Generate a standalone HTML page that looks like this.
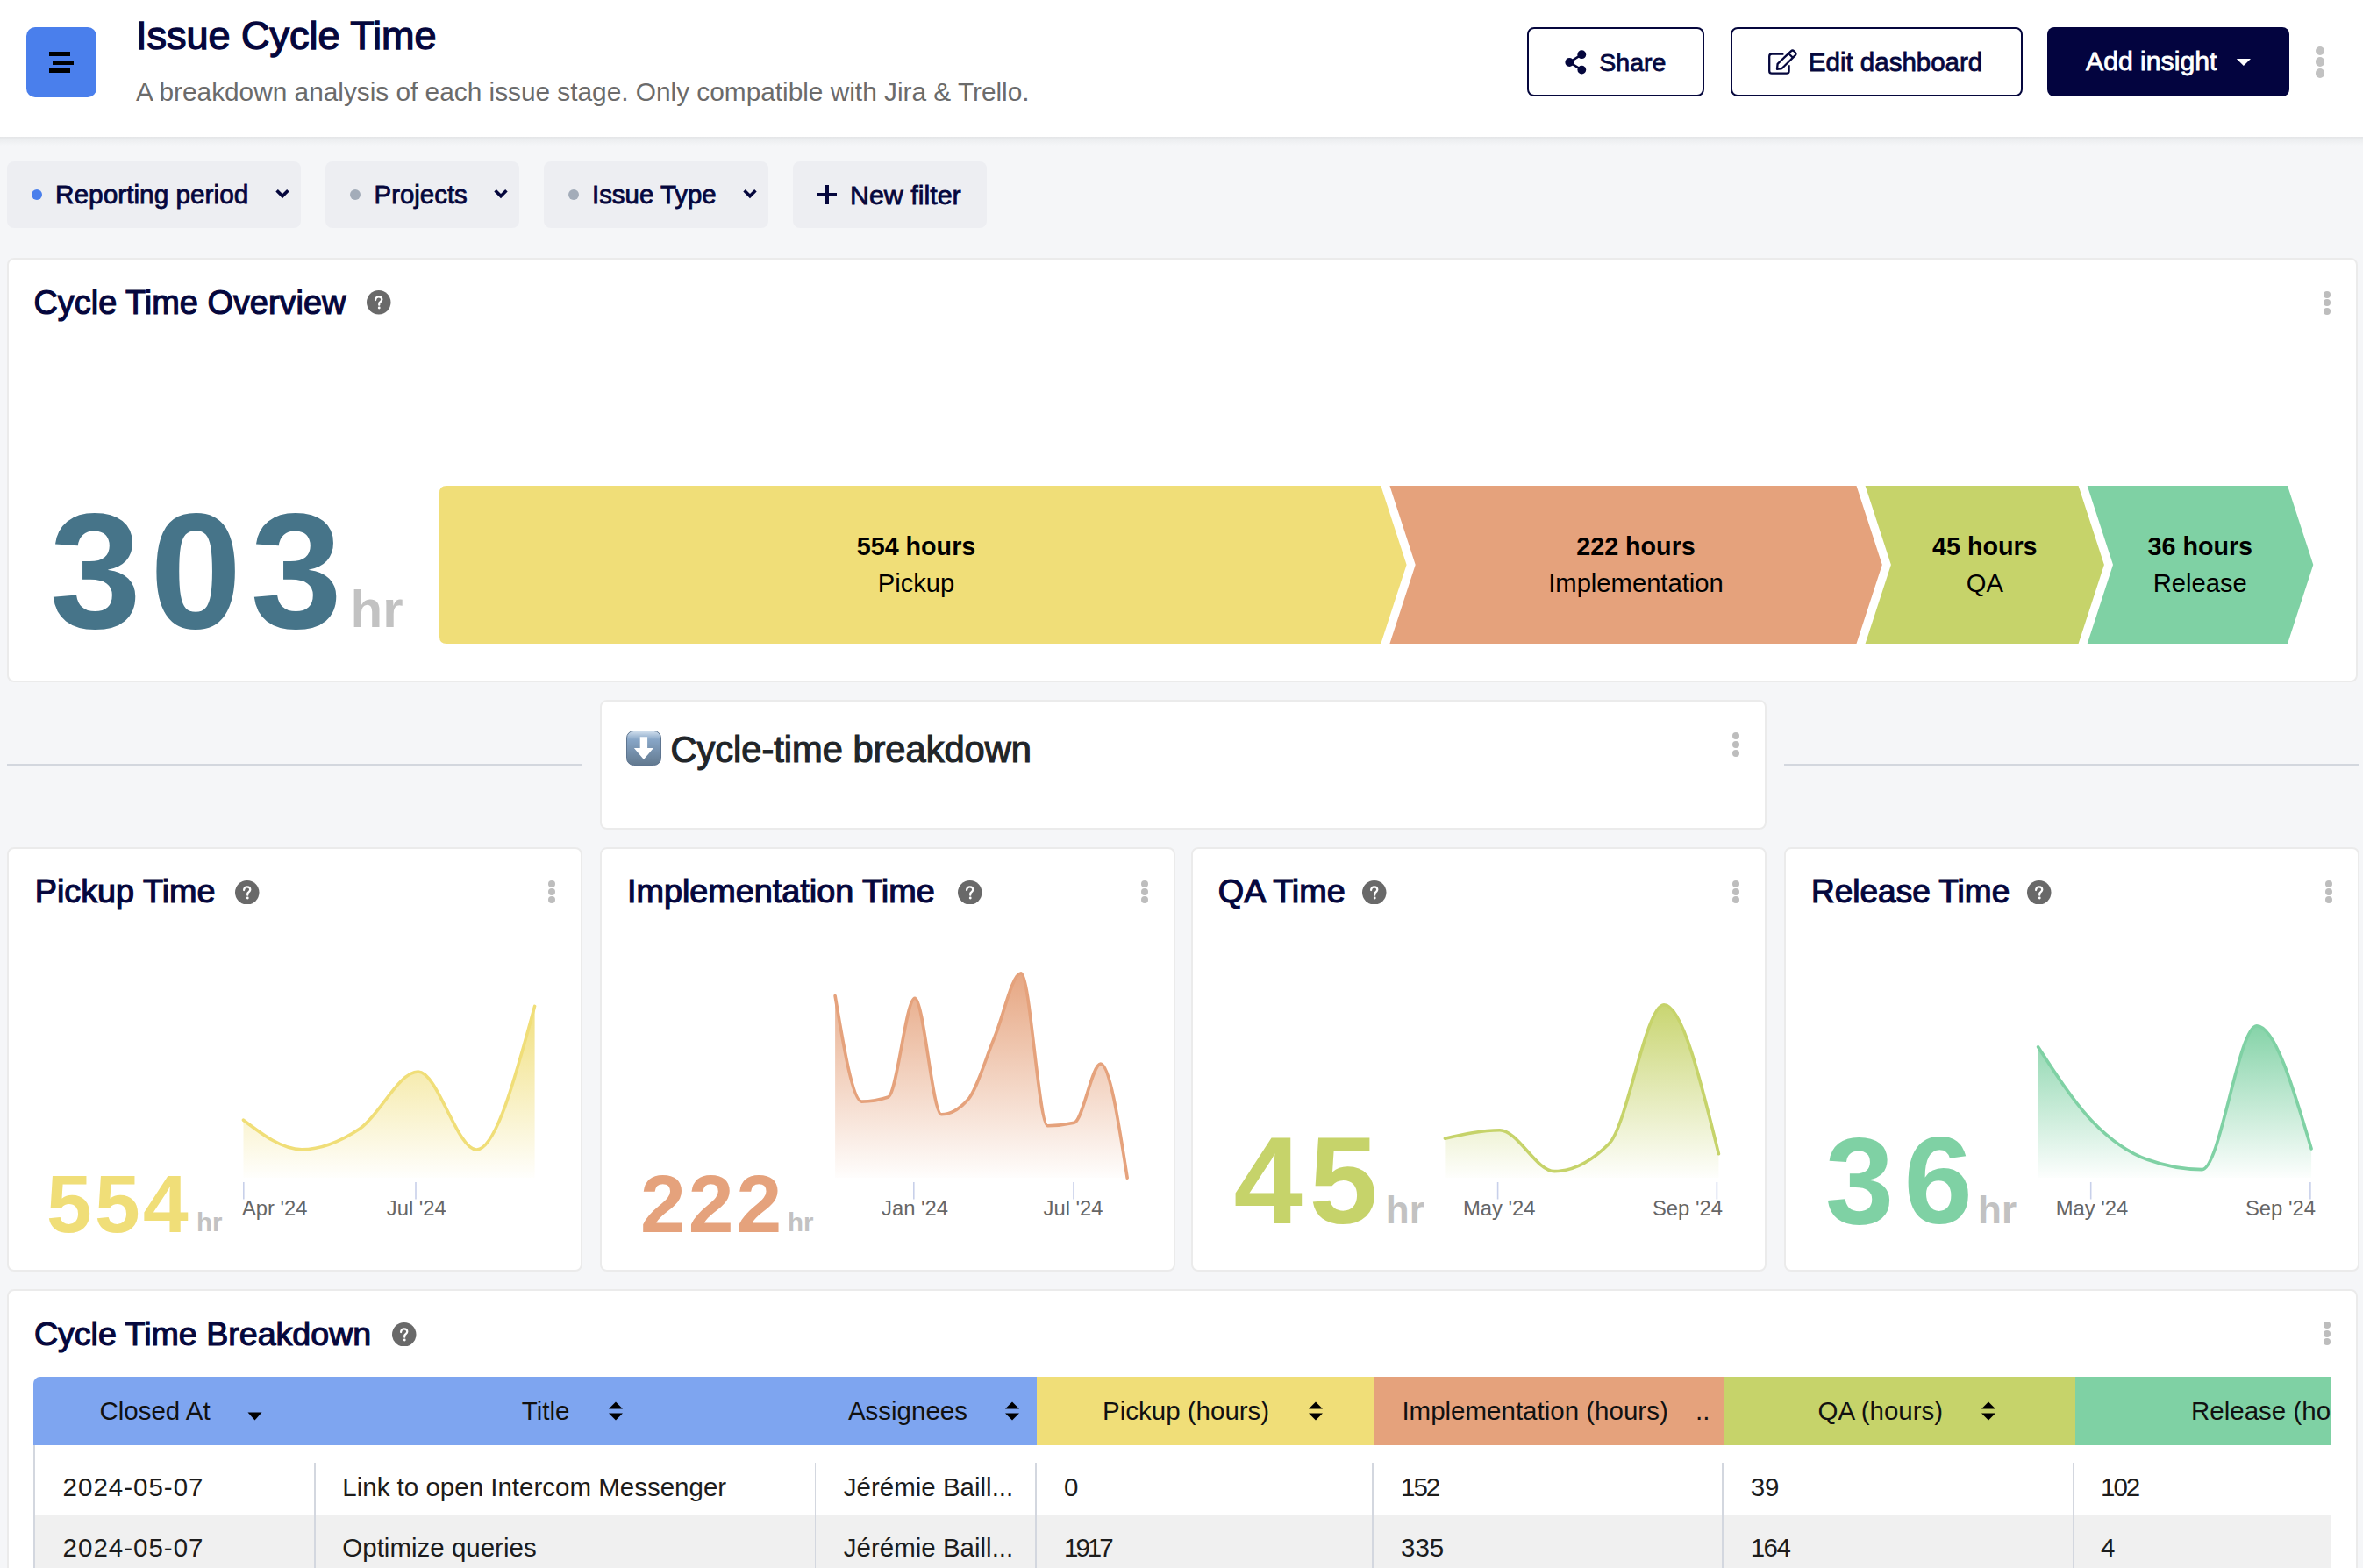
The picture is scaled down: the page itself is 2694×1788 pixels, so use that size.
<!DOCTYPE html>
<html><head><meta charset="utf-8">
<style>
html,body{margin:0;padding:0;}
body{width:2694px;height:1788px;overflow:hidden;position:relative;background:#f5f6f8;font-family:"Liberation Sans",sans-serif;}
.t{position:absolute;white-space:nowrap;line-height:1;}
.b{position:absolute;box-sizing:border-box;}
</style></head><body>
<div class="b" style="left:0px;top:0px;width:2694px;height:156px;background:#fff;"></div>
<div class="b" style="left:0px;top:156px;width:2694px;height:10px;background:linear-gradient(#e4e5e7,#eceef0 35%,#f5f6f8);"></div>
<div class="b" style="left:30px;top:31px;width:80px;height:80px;background:#4a7fec;border-radius:10px;"></div>
<div class="b" style="left:56px;top:59px;width:24px;height:5px;background:#000;"></div>
<div class="b" style="left:60px;top:68.5px;width:24px;height:5.0px;background:#000;"></div>
<div class="b" style="left:56px;top:78px;width:24px;height:5px;background:#000;"></div>
<div class="t" style="left:155.0px;top:17.9px;font-size:45px;font-weight:400;color:#05073d;-webkit-text-stroke:1.4px #05073d;">Issue Cycle Time</div>
<div class="t" style="left:155.0px;top:90.3px;font-size:29.8px;font-weight:400;color:#6b6b6b;">A breakdown analysis of each issue stage. Only compatible with Jira &amp; Trello.</div>
<div class="b" style="left:1741px;top:31px;width:202px;height:79px;border:2px solid #05073d;border-radius:8px;background:#fff;"></div>
<svg class="b" style="left:1780px;top:54px;width:30px;height:34px" viewBox="1780 54 30 34"><g fill="#05073d"><circle cx="1789.3" cy="71" r="4.9"/><circle cx="1803.3" cy="62.2" r="4.9"/><circle cx="1803.3" cy="79.6" r="4.9"/></g><path d="M1789.3 71 L1803.3 62.2 M1789.3 71 L1803.3 79.6" stroke="#05073d" stroke-width="2.6"/></svg>
<div class="t" style="left:1823.3px;top:56.9px;font-size:28.5px;font-weight:400;color:#05073d;-webkit-text-stroke:0.8px #05073d;">Share</div>
<div class="b" style="left:1973px;top:31px;width:333px;height:79px;border:2px solid #05073d;border-radius:8px;background:#fff;"></div>
<svg class="b" style="left:2010px;top:52px;width:44px;height:38px" viewBox="2010 52 44 38"><path d="M2033.4 61.5 L2020 61.5 Q2017.2 61.5 2017.2 64.3 L2017.2 80.9 Q2017.2 83.6 2020 83.6 L2036.8 83.6 Q2039.6 83.6 2039.6 80.9 L2039.6 74.3" fill="none" stroke="#05073d" stroke-width="2.3"/><path d="M2026.6 72.8 L2041.9 58.3 Q2043.6 56.7 2045.3 58.3 L2046.7 59.8 Q2048.2 61.5 2046.7 63.1 L2031.5 78 L2026 78.8 Z M2039.1 61 L2044 65.8" fill="none" stroke="#05073d" stroke-width="2.3" stroke-linejoin="round"/></svg>
<div class="t" style="left:2061.8px;top:56.0px;font-size:29.5px;font-weight:400;color:#05073d;-webkit-text-stroke:0.8px #05073d;">Edit dashboard</div>
<div class="b" style="left:2334px;top:31px;width:276px;height:79px;background:#03043f;border-radius:8px;"></div>
<div class="t" style="left:2378.0px;top:55.4px;font-size:30.2px;font-weight:400;color:#fff;-webkit-text-stroke:0.8px #fff;">Add insight</div>
<svg class="b" style="left:2549px;top:66px;width:18px;height:10px" viewBox="0 0 18 10"><path d="M0.8 0.9 L17 0.9 L8.9 9 Z" fill="#fff"/></svg>
<div class="b" style="left:2639.8px;top:52.6px;width:10.399999999999636px;height:10.299999999999997px;border-radius:50%;background:#c2c2c2;"></div>
<div class="b" style="left:2639.8px;top:65.4px;width:10.399999999999636px;height:10.399999999999991px;border-radius:50%;background:#c2c2c2;"></div>
<div class="b" style="left:2639.8px;top:78.2px;width:10.399999999999636px;height:10.399999999999991px;border-radius:50%;background:#c2c2c2;"></div>
<div class="b" style="left:8px;top:184px;width:335px;height:75.5px;background:#edeef2;border-radius:8px;"></div>
<div class="b" style="left:36px;top:215.7px;width:12px;height:12.0px;background:#4a7fec;border-radius:50%;"></div>
<div class="t" style="left:63.0px;top:206.8px;font-size:29.8px;font-weight:400;color:#05073d;-webkit-text-stroke:0.8px #05073d;">Reporting period</div>
<svg class="b" style="left:314px;top:215px;width:16px;height:12px" viewBox="0 0 16 12"><path d="M1.6 2.2 L8 8.6 L14.4 2.2" fill="none" stroke="#05073d" stroke-width="3.6"/></svg>
<div class="b" style="left:371px;top:184px;width:221px;height:75.5px;background:#edeef2;border-radius:8px;"></div>
<div class="b" style="left:398.5px;top:215.7px;width:12.0px;height:12.0px;background:#a3acb9;border-radius:50%;"></div>
<div class="t" style="left:426.6px;top:207.1px;font-size:29.4px;font-weight:400;color:#05073d;-webkit-text-stroke:0.8px #05073d;">Projects</div>
<svg class="b" style="left:563px;top:215px;width:16px;height:12px" viewBox="0 0 16 12"><path d="M1.6 2.2 L8 8.6 L14.4 2.2" fill="none" stroke="#05073d" stroke-width="3.6"/></svg>
<div class="b" style="left:620px;top:184px;width:256px;height:75.5px;background:#edeef2;border-radius:8px;"></div>
<div class="b" style="left:648px;top:215.7px;width:12px;height:12.0px;background:#a3acb9;border-radius:50%;"></div>
<div class="t" style="left:675.0px;top:207.1px;font-size:29.4px;font-weight:400;color:#05073d;-webkit-text-stroke:0.8px #05073d;">Issue Type</div>
<svg class="b" style="left:847.2px;top:215px;width:16px;height:12px" viewBox="0 0 16 12"><path d="M1.6 2.2 L8 8.6 L14.4 2.2" fill="none" stroke="#05073d" stroke-width="3.6"/></svg>
<div class="b" style="left:904px;top:184px;width:221px;height:75.5px;background:#edeef2;border-radius:8px;"></div>
<div class="b" style="left:932.2px;top:220.3px;width:21.59999999999991px;height:3.5999999999999943px;background:#05073d;"></div>
<div class="b" style="left:941.2px;top:211.4px;width:3.599999999999909px;height:21.400000000000006px;background:#05073d;"></div>
<div class="t" style="left:969.0px;top:206.7px;font-size:30.4px;font-weight:400;color:#05073d;-webkit-text-stroke:0.8px #05073d;">New filter</div>
<div class="b" style="left:8px;top:294px;width:2680px;height:484px;background:#fff;border:2px solid #ebebeb;border-radius:8px;"></div>
<div class="t" style="left:38.5px;top:327.3px;font-size:37.9px;font-weight:400;color:#05073d;-webkit-text-stroke:1.2px #05073d;">Cycle Time Overview</div>
<svg class="b" style="left:418.2px;top:331.2px;width:27.5px;height:27.5px" viewBox="0 0 28 28"><circle cx="14" cy="14" r="14" fill="#696969"/><path d="M10.3 11.2 C10.3 8.9 12 7.6 14 7.6 C16.1 7.6 17.6 8.9 17.6 10.8 C17.6 12.9 15.2 13.4 14.6 15 L14.5 17" fill="none" stroke="#fff" stroke-width="2.3" stroke-linecap="round"/><circle cx="14.5" cy="20.4" r="1.45" fill="#fff"/></svg>
<div class="b" style="left:2649.0px;top:331.5px;width:8.0px;height:8.0px;border-radius:50%;background:#bdbdbd;"></div>
<div class="b" style="left:2649.0px;top:341.2px;width:8.0px;height:8.0px;border-radius:50%;background:#bdbdbd;"></div>
<div class="b" style="left:2649.0px;top:350.9px;width:8.0px;height:8.0px;border-radius:50%;background:#bdbdbd;"></div>
<div class="t" style="left:56.4px;top:557.2px;font-size:188px;font-weight:700;color:#467489;letter-spacing:10px;">303</div>
<div class="t" style="left:399.5px;top:664.7px;font-size:60px;font-weight:700;color:#c2c2c2;">hr</div>
<svg class="b" style="left:0;top:0;width:2694px;height:1788px" viewBox="0 0 2694 1788"><path d="M509 554 L1574.3 554 L1603.6 644 L1574.3 734 L509 734 Q501 734 501 726 L501 562 Q501 554 509 554 Z" fill="#f0de78"/><path d="M1584.4 554 L2116.5 554 L2145.8 644 L2116.5 734 L1584.4 734 L1613.7 644 Z" fill="#e5a27c"/><path d="M2126.6 554 L2369.6 554 L2398.9 644 L2369.6 734 L2126.6 734 L2155.9 644 Z" fill="#c6d36a"/><path d="M2379.7 554 L2608 554 L2637.3 644 L2608 734 L2379.7 734 L2409 644 Z" fill="#7fd1a4"/></svg>
<div class="t" style="left:544.5px;width:1000px;text-align:center;top:609.1px;font-size:28.7px;font-weight:700;color:#000;">554 hours</div>
<div class="t" style="left:544.5px;width:1000px;text-align:center;top:651.1px;font-size:29.2px;font-weight:400;color:#000;">Pickup</div>
<div class="t" style="left:1365.0px;width:1000px;text-align:center;top:609.1px;font-size:28.7px;font-weight:700;color:#000;">222 hours</div>
<div class="t" style="left:1365.0px;width:1000px;text-align:center;top:651.1px;font-size:29.2px;font-weight:400;color:#000;">Implementation</div>
<div class="t" style="left:1762.8px;width:1000px;text-align:center;top:609.1px;font-size:28.7px;font-weight:700;color:#000;">45 hours</div>
<div class="t" style="left:1762.8px;width:1000px;text-align:center;top:651.1px;font-size:29.2px;font-weight:400;color:#000;">QA</div>
<div class="t" style="left:2008.3px;width:1000px;text-align:center;top:609.1px;font-size:28.7px;font-weight:700;color:#000;">36 hours</div>
<div class="t" style="left:2008.3px;width:1000px;text-align:center;top:651.1px;font-size:29.2px;font-weight:400;color:#000;">Release</div>
<div class="b" style="left:8px;top:871px;width:656px;height:2px;background:#d3d7de;"></div>
<div class="b" style="left:2034px;top:870.5px;width:656px;height:2.0px;background:#d3d7de;"></div>
<div class="b" style="left:684px;top:798px;width:1330px;height:148px;background:#fff;border:2px solid #ebebeb;border-radius:8px;"></div>
<svg class="b" style="left:714px;top:833px;width:40px;height:40px" viewBox="0 0 40 40"><defs><linearGradient id="emo" x1="0" y1="0" x2="0" y2="1"><stop offset="0" stop-color="#d2e0ee"/><stop offset="0.25" stop-color="#88a6c7"/><stop offset="1" stop-color="#62798f"/></linearGradient></defs><rect x="0.5" y="0.5" width="39" height="39" rx="8" fill="url(#emo)" stroke="#5e7590" stroke-width="1"/><path d="M15.7 7.3 L24.1 7.3 L24.1 20 L31 20 L19.9 33 L8.9 20 L15.7 20 Z" fill="#fff"/></svg>
<div class="t" style="left:764.4px;top:833.7px;font-size:41.6px;font-weight:400;color:#212529;-webkit-text-stroke:1.2px #212529;">Cycle-time breakdown</div>
<div class="b" style="left:1975.0px;top:835.1px;width:8.0px;height:8.0px;border-radius:50%;background:#bdbdbd;"></div>
<div class="b" style="left:1975.0px;top:844.8px;width:8.0px;height:8.0px;border-radius:50%;background:#bdbdbd;"></div>
<div class="b" style="left:1975.0px;top:854.5px;width:8.0px;height:8.0px;border-radius:50%;background:#bdbdbd;"></div>
<div class="b" style="left:8px;top:966px;width:656px;height:484px;background:#fff;border:2px solid #ebebeb;border-radius:8px;"></div>
<div class="t" style="left:39.7px;top:997.7px;font-size:37.8px;font-weight:400;color:#05073d;-webkit-text-stroke:1.2px #05073d;">Pickup Time</div>
<svg class="b" style="left:268.2px;top:1003.5px;width:27.5px;height:27.5px" viewBox="0 0 28 28"><circle cx="14" cy="14" r="14" fill="#696969"/><path d="M10.3 11.2 C10.3 8.9 12 7.6 14 7.6 C16.1 7.6 17.6 8.9 17.6 10.8 C17.6 12.9 15.2 13.4 14.6 15 L14.5 17" fill="none" stroke="#fff" stroke-width="2.3" stroke-linecap="round"/><circle cx="14.5" cy="20.4" r="1.45" fill="#fff"/></svg>
<div class="b" style="left:625.0px;top:1003.6px;width:8.0px;height:8.0px;border-radius:50%;background:#bdbdbd;"></div>
<div class="b" style="left:625.0px;top:1013.0px;width:8.0px;height:8.0px;border-radius:50%;background:#bdbdbd;"></div>
<div class="b" style="left:625.0px;top:1022.4px;width:8.0px;height:8.000000000000114px;border-radius:50%;background:#bdbdbd;"></div>
<div class="b" style="left:684px;top:966px;width:656px;height:484px;background:#fff;border:2px solid #ebebeb;border-radius:8px;"></div>
<div class="t" style="left:714.9px;top:997.7px;font-size:37.8px;font-weight:400;color:#05073d;-webkit-text-stroke:1.2px #05073d;">Implementation Time</div>
<svg class="b" style="left:1092.2px;top:1003.5px;width:27.5px;height:27.5px" viewBox="0 0 28 28"><circle cx="14" cy="14" r="14" fill="#696969"/><path d="M10.3 11.2 C10.3 8.9 12 7.6 14 7.6 C16.1 7.6 17.6 8.9 17.6 10.8 C17.6 12.9 15.2 13.4 14.6 15 L14.5 17" fill="none" stroke="#fff" stroke-width="2.3" stroke-linecap="round"/><circle cx="14.5" cy="20.4" r="1.45" fill="#fff"/></svg>
<div class="b" style="left:1301.0px;top:1003.6px;width:8.0px;height:8.0px;border-radius:50%;background:#bdbdbd;"></div>
<div class="b" style="left:1301.0px;top:1013.0px;width:8.0px;height:8.0px;border-radius:50%;background:#bdbdbd;"></div>
<div class="b" style="left:1301.0px;top:1022.4px;width:8.0px;height:8.000000000000114px;border-radius:50%;background:#bdbdbd;"></div>
<div class="b" style="left:1358px;top:966px;width:656px;height:484px;background:#fff;border:2px solid #ebebeb;border-radius:8px;"></div>
<div class="t" style="left:1388.8px;top:997.7px;font-size:37.8px;font-weight:400;color:#05073d;-webkit-text-stroke:1.2px #05073d;">QA Time</div>
<svg class="b" style="left:1553.2px;top:1003.5px;width:27.5px;height:27.5px" viewBox="0 0 28 28"><circle cx="14" cy="14" r="14" fill="#696969"/><path d="M10.3 11.2 C10.3 8.9 12 7.6 14 7.6 C16.1 7.6 17.6 8.9 17.6 10.8 C17.6 12.9 15.2 13.4 14.6 15 L14.5 17" fill="none" stroke="#fff" stroke-width="2.3" stroke-linecap="round"/><circle cx="14.5" cy="20.4" r="1.45" fill="#fff"/></svg>
<div class="b" style="left:1975.2px;top:1003.6px;width:8.0px;height:8.0px;border-radius:50%;background:#bdbdbd;"></div>
<div class="b" style="left:1975.2px;top:1013.0px;width:8.0px;height:8.0px;border-radius:50%;background:#bdbdbd;"></div>
<div class="b" style="left:1975.2px;top:1022.4px;width:8.0px;height:8.000000000000114px;border-radius:50%;background:#bdbdbd;"></div>
<div class="b" style="left:2034px;top:966px;width:656px;height:484px;background:#fff;border:2px solid #ebebeb;border-radius:8px;"></div>
<div class="t" style="left:2065.0px;top:998.4px;font-size:37.0px;font-weight:400;color:#05073d;-webkit-text-stroke:1.2px #05073d;">Release Time</div>
<svg class="b" style="left:2311.4px;top:1003.5px;width:27.5px;height:27.5px" viewBox="0 0 28 28"><circle cx="14" cy="14" r="14" fill="#696969"/><path d="M10.3 11.2 C10.3 8.9 12 7.6 14 7.6 C16.1 7.6 17.6 8.9 17.6 10.8 C17.6 12.9 15.2 13.4 14.6 15 L14.5 17" fill="none" stroke="#fff" stroke-width="2.3" stroke-linecap="round"/><circle cx="14.5" cy="20.4" r="1.45" fill="#fff"/></svg>
<div class="b" style="left:2651.0px;top:1003.6px;width:8.0px;height:8.0px;border-radius:50%;background:#bdbdbd;"></div>
<div class="b" style="left:2651.0px;top:1013.0px;width:8.0px;height:8.0px;border-radius:50%;background:#bdbdbd;"></div>
<div class="b" style="left:2651.0px;top:1022.4px;width:8.0px;height:8.000000000000114px;border-radius:50%;background:#bdbdbd;"></div>
<svg class="b" style="left:0;top:0;width:2694px;height:1788px;overflow:visible" viewBox="0 0 2694 1788"><defs><linearGradient id="g1" x1="0" y1="1147.4" x2="0" y2="1343" gradientUnits="userSpaceOnUse"><stop offset="0" stop-color="#f0de78" stop-opacity="0.95"/><stop offset="1" stop-color="#f0de78" stop-opacity="0.02"/></linearGradient></defs><path d="M277.50,1277.20 C299.63,1294.00 321.77,1310.80 343.90,1310.80 C366.03,1310.80 388.17,1301.78 410.30,1287.00 C432.47,1272.20 454.63,1222.00 476.80,1222.00 C498.93,1222.00 521.07,1311.00 543.20,1311.00 C565.33,1311.00 587.47,1229.20 609.60,1147.40 L609.60,1343 L277.50,1343 Z" fill="url(#g1)"/><path d="M277.50,1277.20 C299.63,1294.00 321.77,1310.80 343.90,1310.80 C366.03,1310.80 388.17,1301.78 410.30,1287.00 C432.47,1272.20 454.63,1222.00 476.80,1222.00 C498.93,1222.00 521.07,1311.00 543.20,1311.00 C565.33,1311.00 587.47,1229.20 609.60,1147.40" fill="none" stroke="#f0de78" stroke-width="3.6" stroke-linecap="round"/><line x1="277.8" y1="1348" x2="277.8" y2="1367.5" stroke="#c8d0ea" stroke-width="1.6"/><line x1="474" y1="1348" x2="474" y2="1367.5" stroke="#c8d0ea" stroke-width="1.6"/></svg>
<svg class="b" style="left:0;top:0;width:2694px;height:1788px;overflow:visible" viewBox="0 0 2694 1788"><defs><linearGradient id="g2" x1="0" y1="1109.8" x2="0" y2="1343" gradientUnits="userSpaceOnUse"><stop offset="0" stop-color="#e5a27c" stop-opacity="0.95"/><stop offset="1" stop-color="#e5a27c" stop-opacity="0.02"/></linearGradient></defs><path d="M952.10,1135.60 C962.19,1195.85 972.29,1256.10 982.38,1256.10 C992.47,1256.10 1002.57,1254.40 1012.66,1251.00 C1022.75,1247.60 1032.85,1138.20 1042.94,1138.20 C1053.03,1138.20 1063.13,1270.80 1073.22,1270.80 C1083.31,1270.80 1093.41,1265.20 1103.50,1254.00 C1113.59,1242.80 1123.69,1207.03 1133.78,1183.00 C1143.87,1158.97 1153.97,1109.80 1164.06,1109.80 C1174.15,1109.80 1184.25,1283.70 1194.34,1283.70 C1204.43,1283.70 1214.53,1282.57 1224.62,1280.30 C1234.71,1278.03 1244.81,1213.10 1254.90,1213.10 C1264.99,1213.10 1275.09,1278.10 1285.18,1343.10 L1285.18,1343 L952.10,1343 Z" fill="url(#g2)"/><path d="M952.10,1135.60 C962.19,1195.85 972.29,1256.10 982.38,1256.10 C992.47,1256.10 1002.57,1254.40 1012.66,1251.00 C1022.75,1247.60 1032.85,1138.20 1042.94,1138.20 C1053.03,1138.20 1063.13,1270.80 1073.22,1270.80 C1083.31,1270.80 1093.41,1265.20 1103.50,1254.00 C1113.59,1242.80 1123.69,1207.03 1133.78,1183.00 C1143.87,1158.97 1153.97,1109.80 1164.06,1109.80 C1174.15,1109.80 1184.25,1283.70 1194.34,1283.70 C1204.43,1283.70 1214.53,1282.57 1224.62,1280.30 C1234.71,1278.03 1244.81,1213.10 1254.90,1213.10 C1264.99,1213.10 1275.09,1278.10 1285.18,1343.10" fill="none" stroke="#e5a27c" stroke-width="3.6" stroke-linecap="round"/><line x1="1041.8" y1="1348" x2="1041.8" y2="1367.5" stroke="#c8d0ea" stroke-width="1.6"/><line x1="1224" y1="1348" x2="1224" y2="1367.5" stroke="#c8d0ea" stroke-width="1.6"/></svg>
<svg class="b" style="left:0;top:0;width:2694px;height:1788px;overflow:visible" viewBox="0 0 2694 1788"><defs><linearGradient id="g3" x1="0" y1="1145.7" x2="0" y2="1343" gradientUnits="userSpaceOnUse"><stop offset="0" stop-color="#c6d36a" stop-opacity="0.95"/><stop offset="1" stop-color="#c6d36a" stop-opacity="0.02"/></linearGradient></defs><path d="M1647.40,1298.20 C1668.20,1293.50 1689.00,1288.80 1709.80,1288.80 C1730.60,1288.80 1751.40,1335.60 1772.20,1335.60 C1793.00,1335.60 1813.80,1325.07 1834.60,1304.00 C1855.40,1282.93 1876.20,1145.70 1897.00,1145.70 C1917.80,1145.70 1938.60,1230.70 1959.40,1315.70 L1959.40,1343 L1647.40,1343 Z" fill="url(#g3)"/><path d="M1647.40,1298.20 C1668.20,1293.50 1689.00,1288.80 1709.80,1288.80 C1730.60,1288.80 1751.40,1335.60 1772.20,1335.60 C1793.00,1335.60 1813.80,1325.07 1834.60,1304.00 C1855.40,1282.93 1876.20,1145.70 1897.00,1145.70 C1917.80,1145.70 1938.60,1230.70 1959.40,1315.70" fill="none" stroke="#c6d36a" stroke-width="3.6" stroke-linecap="round"/><line x1="1707.6" y1="1348" x2="1707.6" y2="1367.5" stroke="#c8d0ea" stroke-width="1.6"/><line x1="1957.4" y1="1348" x2="1957.4" y2="1367.5" stroke="#c8d0ea" stroke-width="1.6"/></svg>
<svg class="b" style="left:0;top:0;width:2694px;height:1788px;overflow:visible" viewBox="0 0 2694 1788"><defs><linearGradient id="g4" x1="0" y1="1169.7" x2="0" y2="1343" gradientUnits="userSpaceOnUse"><stop offset="0" stop-color="#7fd1a4" stop-opacity="0.95"/><stop offset="1" stop-color="#7fd1a4" stop-opacity="0.02"/></linearGradient></defs><path d="M2323.60,1193.80 C2344.37,1225.79 2365.13,1257.78 2385.90,1279.20 C2406.67,1300.62 2427.43,1314.77 2448.20,1322.30 C2468.97,1329.83 2489.73,1333.60 2510.50,1333.60 C2531.27,1333.60 2552.03,1169.70 2572.80,1169.70 C2593.57,1169.70 2614.33,1239.80 2635.10,1309.90 L2635.10,1343 L2323.60,1343 Z" fill="url(#g4)"/><path d="M2323.60,1193.80 C2344.37,1225.79 2365.13,1257.78 2385.90,1279.20 C2406.67,1300.62 2427.43,1314.77 2448.20,1322.30 C2468.97,1329.83 2489.73,1333.60 2510.50,1333.60 C2531.27,1333.60 2552.03,1169.70 2572.80,1169.70 C2593.57,1169.70 2614.33,1239.80 2635.10,1309.90" fill="none" stroke="#7fd1a4" stroke-width="3.6" stroke-linecap="round"/><line x1="2383.7" y1="1348" x2="2383.7" y2="1367.5" stroke="#c8d0ea" stroke-width="1.6"/><line x1="2633.9" y1="1348" x2="2633.9" y2="1367.5" stroke="#c8d0ea" stroke-width="1.6"/></svg>
<div class="t" style="left:53.0px;top:1326.7px;font-size:93px;font-weight:700;color:#f0de78;letter-spacing:3.3px;">554</div>
<div class="t" style="left:224.0px;top:1378.8px;font-size:29.5px;font-weight:700;color:#c2c2c2;">hr</div>
<div class="t" style="left:730.0px;top:1326.7px;font-size:93px;font-weight:700;color:#e5a27c;letter-spacing:3px;">222</div>
<div class="t" style="left:898.0px;top:1378.8px;font-size:29.5px;font-weight:700;color:#c2c2c2;">hr</div>
<div class="t" style="left:1406.6px;top:1276.3px;font-size:141px;font-weight:700;color:#c6d36a;letter-spacing:7.4px;">45</div>
<div class="t" style="left:1579.8px;top:1357.7px;font-size:44px;font-weight:700;color:#c2c2c2;">hr</div>
<div class="t" style="left:2080.8px;top:1276.3px;font-size:141px;font-weight:700;color:#7fd1a4;letter-spacing:11.4px;">36</div>
<div class="t" style="left:2255.0px;top:1357.7px;font-size:44px;font-weight:700;color:#c2c2c2;">hr</div>
<div class="t" style="left:275.9px;top:1366.0px;font-size:23.8px;font-weight:400;color:#666;">Apr '24</div>
<div class="t" style="left:440.8px;top:1366.0px;font-size:23.8px;font-weight:400;color:#666;">Jul '24</div>
<div class="t" style="left:1005.0px;top:1366.0px;font-size:23.8px;font-weight:400;color:#666;">Jan '24</div>
<div class="t" style="left:1189.5px;top:1366.0px;font-size:23.8px;font-weight:400;color:#666;">Jul '24</div>
<div class="t" style="left:1668.0px;top:1366.0px;font-size:23.8px;font-weight:400;color:#666;">May '24</div>
<div class="t" style="left:1884.0px;top:1366.0px;font-size:23.8px;font-weight:400;color:#666;">Sep '24</div>
<div class="t" style="left:2343.7px;top:1366.0px;font-size:23.8px;font-weight:400;color:#666;">May '24</div>
<div class="t" style="left:2560.0px;top:1366.0px;font-size:23.8px;font-weight:400;color:#666;">Sep '24</div>
<div class="b" style="left:8px;top:1470px;width:2680px;height:330px;background:#fff;border:2px solid #ebebeb;border-radius:8px;"></div>
<div class="t" style="left:38.9px;top:1503.0px;font-size:37.6px;font-weight:400;color:#05073d;-webkit-text-stroke:1.2px #05073d;">Cycle Time Breakdown</div>
<svg class="b" style="left:447.2px;top:1507.5px;width:27.5px;height:27.5px" viewBox="0 0 28 28"><circle cx="14" cy="14" r="14" fill="#696969"/><path d="M10.3 11.2 C10.3 8.9 12 7.6 14 7.6 C16.1 7.6 17.6 8.9 17.6 10.8 C17.6 12.9 15.2 13.4 14.6 15 L14.5 17" fill="none" stroke="#fff" stroke-width="2.3" stroke-linecap="round"/><circle cx="14.5" cy="20.4" r="1.45" fill="#fff"/></svg>
<div class="b" style="left:2649.0px;top:1507.2px;width:8.0px;height:8.0px;border-radius:50%;background:#bdbdbd;"></div>
<div class="b" style="left:2649.0px;top:1516.8px;width:8.0px;height:8.0px;border-radius:50%;background:#bdbdbd;"></div>
<div class="b" style="left:2649.0px;top:1526.4px;width:8.0px;height:8.0px;border-radius:50%;background:#bdbdbd;"></div>
<div class="b" style="left:38px;top:1570px;width:1144px;height:78px;background:#7ea5f0;border-top-left-radius:8px;"></div>
<div class="b" style="left:1182px;top:1570px;width:384px;height:78px;background:#f0de78;"></div>
<div class="b" style="left:1566px;top:1570px;width:400px;height:78px;background:#e5a27c;"></div>
<div class="b" style="left:1966px;top:1570px;width:400px;height:78px;background:#c6d36a;"></div>
<div class="b" style="left:2366px;top:1570px;width:292px;height:78px;background:#7fd1a4;"></div>
<div class="t" style="left:113.4px;top:1594.4px;font-size:29.5px;font-weight:400;color:#111;">Closed At</div>
<svg class="b" style="left:282px;top:1610px;width:17px;height:10px" viewBox="0 0 17 10"><path d="M0.5 0.5 L16.5 0.5 L8.5 9.5 Z" fill="#000"/></svg>
<div class="t" style="left:594.8px;top:1594.4px;font-size:29.5px;font-weight:400;color:#111;">Title</div>
<svg class="b" style="left:693px;top:1598.4px;width:18px;height:22px" viewBox="0 0 18 22"><path d="M9 0.5 L17 8.5 L1 8.5 Z M1 13.5 L17 13.5 L9 21.5 Z" fill="#000"/></svg>
<div class="t" style="left:966.9px;top:1594.4px;font-size:29.5px;font-weight:400;color:#111;">Assignees</div>
<svg class="b" style="left:1145px;top:1598.4px;width:18px;height:22px" viewBox="0 0 18 22"><path d="M9 0.5 L17 8.5 L1 8.5 Z M1 13.5 L17 13.5 L9 21.5 Z" fill="#000"/></svg>
<div class="t" style="left:1257.0px;top:1594.4px;font-size:29.5px;font-weight:400;color:#111;">Pickup (hours)</div>
<svg class="b" style="left:1490.6px;top:1598.4px;width:18px;height:22px" viewBox="0 0 18 22"><path d="M9 0.5 L17 8.5 L1 8.5 Z M1 13.5 L17 13.5 L9 21.5 Z" fill="#000"/></svg>
<div class="t" style="left:1598.4px;top:1594.4px;font-size:29.5px;font-weight:400;color:#111;">Implementation (hours)</div>
<div class="t" style="left:1933.0px;top:1594.4px;font-size:29.5px;font-weight:400;color:#111;">..</div>
<div class="t" style="left:2072.5px;top:1594.4px;font-size:29.5px;font-weight:400;color:#111;">QA (hours)</div>
<svg class="b" style="left:2258px;top:1598.4px;width:18px;height:22px" viewBox="0 0 18 22"><path d="M9 0.5 L17 8.5 L1 8.5 Z M1 13.5 L17 13.5 L9 21.5 Z" fill="#000"/></svg>
<div class="b" style="left:2366px;top:1570px;width:292px;height:78px;overflow:hidden"><div class="t" style="left:132.0px;top:24.4px;font-size:29.5px;font-weight:400;color:#111;">Release (hours)</div>
</div>
<div class="b" style="left:38px;top:1648px;width:2px;height:152px;background:#d3d7df;"></div>
<div class="b" style="left:40px;top:1728px;width:2618px;height:72px;background:#f0f0f0;"></div>
<div class="b" style="left:358.25px;top:1668px;width:1.5px;height:132px;background:#d3d7df;"></div>
<div class="b" style="left:928.95px;top:1668px;width:1.5px;height:132px;background:#d3d7df;"></div>
<div class="b" style="left:1180.25px;top:1668px;width:1.5px;height:132px;background:#d3d7df;"></div>
<div class="b" style="left:1564.25px;top:1668px;width:1.5px;height:132px;background:#d3d7df;"></div>
<div class="b" style="left:1963.25px;top:1668px;width:1.5px;height:132px;background:#d3d7df;"></div>
<div class="b" style="left:2362.95px;top:1668px;width:1.5px;height:132px;background:#d3d7df;"></div>
<div class="t" style="left:71.6px;top:1680.5px;font-size:29.5px;font-weight:400;color:#1c1c1c;letter-spacing:1.0px;">2024-05-07</div>
<div class="t" style="left:390.3px;top:1680.5px;font-size:29.5px;font-weight:400;color:#1c1c1c;">Link to open Intercom Messenger</div>
<div class="t" style="left:961.8px;top:1680.5px;font-size:29.5px;font-weight:400;color:#1c1c1c;">J&eacute;r&eacute;mie Baill...</div>
<div class="t" style="left:1213.0px;top:1680.5px;font-size:29.5px;font-weight:400;color:#1c1c1c;">0</div>
<div class="t" style="left:1597.0px;top:1680.5px;font-size:29.5px;font-weight:400;color:#1c1c1c;letter-spacing:-2px;">152</div>
<div class="t" style="left:1995.7px;top:1680.5px;font-size:29.5px;font-weight:400;color:#1c1c1c;">39</div>
<div class="t" style="left:2395.0px;top:1680.5px;font-size:29.5px;font-weight:400;color:#1c1c1c;letter-spacing:-2px;">102</div>
<div class="t" style="left:71.6px;top:1750.2px;font-size:29.5px;font-weight:400;color:#1c1c1c;letter-spacing:1.0px;">2024-05-07</div>
<div class="t" style="left:390.3px;top:1750.2px;font-size:29.5px;font-weight:400;color:#1c1c1c;">Optimize queries</div>
<div class="t" style="left:961.8px;top:1750.2px;font-size:29.5px;font-weight:400;color:#1c1c1c;">J&eacute;r&eacute;mie Baill...</div>
<div class="t" style="left:1213.0px;top:1750.2px;font-size:29.5px;font-weight:400;color:#1c1c1c;letter-spacing:-3px;">1917</div>
<div class="t" style="left:1597.0px;top:1750.2px;font-size:29.5px;font-weight:400;color:#1c1c1c;">335</div>
<div class="t" style="left:1995.7px;top:1750.2px;font-size:29.5px;font-weight:400;color:#1c1c1c;letter-spacing:-1.5px;">164</div>
<div class="t" style="left:2395.0px;top:1750.2px;font-size:29.5px;font-weight:400;color:#1c1c1c;">4</div>
</body></html>
